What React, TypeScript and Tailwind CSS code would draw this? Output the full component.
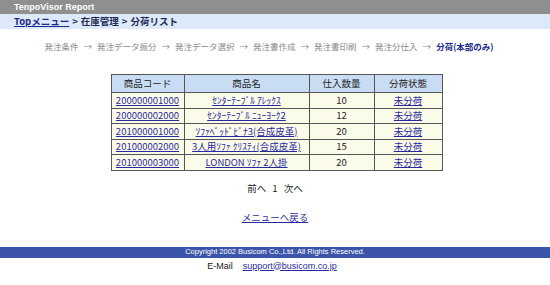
import React from 'react';

interface Row {
  code: string;
  name: string;
  qty: number;
}

const rows: Row[] = [
  { code: '200000001000', name: 'ｾﾝﾀｰﾃｰﾌﾞﾙ ｱﾚｯｸｽ', qty: 10 },
  { code: '200000002000', name: 'ｾﾝﾀｰﾃｰﾌﾞﾙ ﾆｭｰﾖｰｸ2', qty: 12 },
  { code: '201000001000', name: 'ｿﾌｧﾍﾞｯﾄﾞﾋﾞﾅ3(合成皮革)', qty: 20 },
  { code: '201000002000', name: '3人用ｿﾌｧ ｸﾘｽﾃｨ(合成皮革)', qty: 15 },
  { code: '201000003000', name: 'LONDON ｿﾌｧ 2人掛', qty: 20 },
];

const steps = ['発注条件', '発注データ振分', '発注データ選択', '発注書作成', '発注書印刷', '発注分仕入'];

const font = "font-['Noto_Sans_CJK_JP','Liberation_Sans',sans-serif]";

export default function App() {
  return (
    <div className={`w-[550px] h-[285px] bg-white ${font} text-[10px] leading-none`}>
      {/* Header */}
      <div className="h-[14px] bg-[#8f8f8f] flex items-center pl-[14px]">
        <span className="text-white font-bold text-[9px] font-['Liberation_Sans',sans-serif]">TenpoVisor Report</span>
      </div>
      <div className="h-[15px] bg-[#dce9f8] flex items-center pl-[14px] text-[#1b2a55] font-bold text-[9.5px]">
        <a className="underline text-[#1b2a8a]">Topメニュー</a>
        <span className="mx-[3px]">&gt;</span>
        <span>在庫管理</span>
        <span className="mx-[3px]">&gt;</span>
        <span>分荷リスト</span>
      </div>

      {/* Steps */}
      <div className="mt-[11px] flex justify-center items-center text-[#8a8a8a] text-[8.5px] h-[12px] pr-[12px]">
        {steps.map((s) => (
          <React.Fragment key={s}>
            <span>{s}</span>
            <span className="mx-[5px]">→</span>
          </React.Fragment>
        ))}
        <span className="text-[#1b2a8a] font-bold">分荷(本部のみ)</span>
      </div>

      {/* Table */}
      <div className="flex justify-center mt-[22px] pl-[3px]">
        <table className="border-collapse border border-[#555] text-[9.5px] text-[#222]">
          <thead>
            <tr className="bg-[#c8dcf4] h-[18px]">
              <th className="w-[73px] border border-[#555] font-normal">商品コード</th>
              <th className="w-[125px] border border-[#555] font-normal">商品名</th>
              <th className="w-[65px] border border-[#555] font-normal">仕入数量</th>
              <th className="w-[68px] border border-[#555] font-normal">分荷状態</th>
            </tr>
          </thead>
          <tbody>
            {rows.map((r) => (
              <tr key={r.code} className="bg-[#fbfbe9] h-[15.5px]">
                <td className="border border-[#555] text-center">
                  <a className="underline text-[#2a2aa0]">{r.code}</a>
                </td>
                <td className="border border-[#555] text-center">
                  <a className="underline text-[#2a2aa0] whitespace-nowrap">{r.name}</a>
                </td>
                <td className="border border-[#555] text-center">{r.qty}</td>
                <td className="border border-[#555] text-center">
                  <a className="underline text-[#2a2aa0]">未分荷</a>
                </td>
              </tr>
            ))}
          </tbody>
        </table>
      </div>

      {/* Paging */}
      <div className="mt-[13px] flex justify-center gap-[6px] text-[#222] text-[9.5px]">
        <span>前へ</span>
        <span>1</span>
        <span>次へ</span>
      </div>
      <div className="mt-[20px] flex justify-center text-[9.5px]">
        <a className="underline text-[#2a2aa0]">メニューへ戻る</a>
      </div>

      {/* Footer */}
      <div className="mt-[24px] h-[11px] bg-[#3b56a8] flex items-center justify-center">
        <span className="text-white text-[7.5px] font-['Liberation_Sans',sans-serif]">
          Copyright 2002 Busicom Co.,Ltd. All Rights Reserved.
        </span>
      </div>
      <div className="mt-[4px] flex justify-center gap-[10px] text-[9px] font-['Liberation_Sans',sans-serif] pr-[6px]">
        <span className="text-[#222]">E-Mail</span>
        <a className="underline text-[#2a2aa0]">support@busicom.co.jp</a>
      </div>
    </div>
  );
}
